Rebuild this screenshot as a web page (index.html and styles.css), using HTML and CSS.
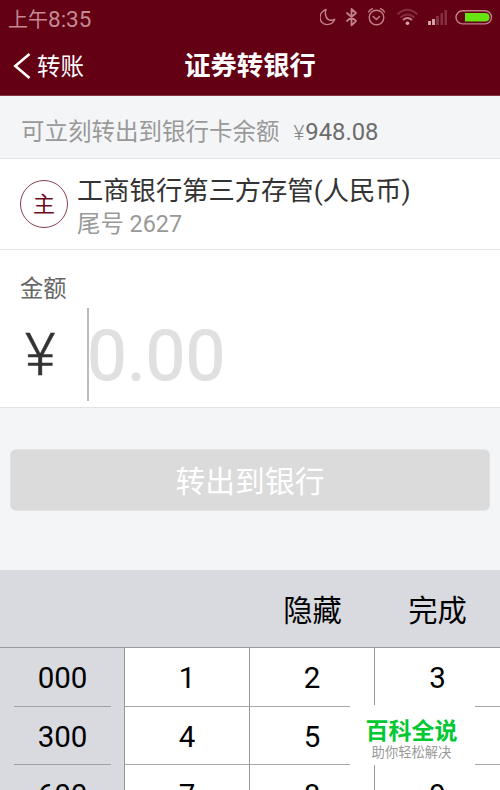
FILE: index.html
```html
<!DOCTYPE html>
<html lang="zh-CN">
<head>
<meta charset="utf-8">
<title>证券转银行</title>
<link rel="stylesheet" href="styles.css">
</head>
<body>
<main class="screen">
  <header class="top">
    <div class="status">
      <span class="clock">上午<span class="time">8:35</span></span>
      <svg class="status-icons" width="176" height="24" viewBox="0 0 176 24" fill="none" stroke="#c0808c" stroke-width="1.4" stroke-linecap="round" stroke-linejoin="round">
        <path d="M6 4.500C3 5.500 0 8.500 0 12.300c0 4 3 7.300 7.300 7.300 3.200 0 6-1.800 7.500-5.300-1.200.6-2.500.9-3.800.9-4.500 0-6.800-5.300-5-10.700z"/>
        <path d="M27 8l9 8-4.500 4.300V4l4.500 4-9 8" stroke-width="1.800"/>
        <circle cx="56.500" cy="12.500" r="7.300"/><path d="M53 11.500l3.500 3 3-3M48.500 7q1.300-2.400 4-3.400M64.500 7q-1.300-2.400-4-3.400"/>
        <g stroke-linecap="butt"><path d="M77.500 9.300q10-9 20 0M80.500 12.500q7-6 14 0" stroke="#862f40" stroke-width="1.800"/><path d="M83 15q4.500-4 9 0" stroke-width="2"/></g>
        <circle cx="87.500" cy="18.200" r="1.800" fill="#d5a7af" stroke="none"/>
        <g stroke="none"><path d="M108 16h3v4h-3zM112 14h3v6h-3z" fill="#d0a1aa"/><path d="M116 11h3v9h-3zM120.500 8h2.500v12h-2.500zM124.500 5h2.500v15h-2.500z" fill="#862f40"/></g>
        <rect x="136" y="5.700" width="35.500" height="13.200" rx="6.600"/>
        <path d="M145 8h20q4.500 0 4.500 4.300t-4.500 4.300h-20z" fill="#66e414" stroke="none"/>
      </svg>
    </div>
    <nav class="nav">
      <a class="back"><svg width="18" height="26" viewBox="0 0 18 26" fill="none" stroke="#fff" stroke-width="2.600"><path d="M16.500 1L2.300 13l14.200 12"/></svg><span>转账</span></a>
      <h1 class="title">证券转银行</h1>
    </nav>
  </header>
  <section class="balance"><span>可立刻转出到银行卡余额</span><span class="yen-small">¥</span><span class="sum">948.08</span></section>
  <section class="account">
    <div class="badge">主</div>
    <div class="details"><div class="name">工商银行第三方存管(人民币)</div><div class="tail">尾号 2627</div></div>
  </section>
  <section class="amount">
    <div class="label">金额</div>
    <div class="entry"><span class="yen">¥</span><span class="field">0.00</span></div>
  </section>
  <button class="submit">转出到银行</button>
  <section class="keyboard">
    <div class="tools"><span class="hide">隐藏</span><span>完成</span></div>
    <div class="keys">
      <div class="key side"><span>000</span></div><div class="key">1</div><div class="key">2</div><div class="key">3</div>
      <div class="key side"><span>300</span></div><div class="key">4</div><div class="key">5</div><div class="key"></div>
      <div class="key side"><span>600</span></div><div class="key">7</div><div class="key">8</div><div class="key">9</div>
    </div>
    <aside class="mark"><strong>百科全说</strong><small>助你轻松解决</small></aside>
  </section>
</main>
</body>
</html>
```
FILE: styles.css
```css
* { box-sizing: border-box; }
body { margin: 0; font-family: Roboto, "Noto Sans CJK SC", sans-serif; }
.screen { width: 500px; height: 790px; overflow: hidden; background: #f4f5f7; display: flex; flex-direction: column; }
.top { height: 96px; flex: none; background: #640014; border-bottom: 1px solid #86384a; }
.status { height: 36px; display: flex; justify-content: space-between; padding: 0 4px 0 8px; color: #c48a95; }
.clock { font-size: 20px; line-height: 38px; white-space: nowrap; }
.time { font-size: 22.500px; }
.status-icons { margin-top: 5px; }
.nav { height: 59px; display: grid; grid-template-columns: 1fr auto 1fr; align-items: center; color: #fff; }
.back { display: flex; align-items: center; gap: 6px; padding-left: 13px; font-size: 23.5px; line-height: 30px; }
.back span { padding-top: 2px; }
.title { margin: 0; padding-top: 1px; font-size: 26.300px; line-height: 34px; }
.balance { height: 63px; flex: none; display: flex; align-items: baseline; padding-left: 21px; border-bottom: 1px solid #e2e3e5; font-size: 23.500px; line-height: 73px; color: #999; }
.yen-small { margin-left: 14px; font-size: 21px; color: #888; font-weight: 300; }
.sum { margin-left: 1px; font-size: 23.800px; color: #6c6c6c; }
.account { height: 91px; flex: none; display: flex; align-items: center; gap: 9px; padding-left: 20px; background: #fff; border-bottom: 1px solid #e2e3e5; }
.badge { width: 48px; height: 48px; border: 1px solid #8b3e4d; border-radius: 50%; color: #6d0b1e; font-size: 22px; line-height: 48px; text-align: center; }
.details { padding-top: 5px; }
.name { font-size: 26.300px; line-height: 34px; color: #333; white-space: nowrap; }
.tail { font-size: 23.400px; line-height: 32px; color: #999; }
.amount { height: 158px; flex: none; padding: 22px 0 0 20px; background: #fff; border-bottom: 1px solid #e2e3e5; }
.label { height: 36px; font-size: 23.300px; line-height: 34px; color: #666; }
.entry { height: 93px; display: flex; }
.yen { width: 67px; padding-left: 5px; font-size: 59px; font-weight: 300; line-height: 93px; color: #333; -webkit-text-stroke: .5px #333; }
.field { border-left: 2px solid #bbb; font-size: 71px; line-height: 96px; color: #e0e0e0; text-indent: -2px; -webkit-text-stroke: .8px #e0e0e0; }
.submit { height: 62px; flex: none; margin: 41px 10px 59px; padding: 4px 0 0; border: 1px solid #e2e3e4; border-radius: 6px; background: #dbdbdb; color: #fff; font: 29.800px/56px Roboto, "Noto Sans CJK SC", sans-serif; }
.keyboard { position: relative; height: 220px; flex: none; background: #d9dadf; color: #000; }
.tools { height: 78px; display: grid; grid-template-columns: repeat(4, 125px); border-bottom: 1px solid #97989c; font-size: 29.300px; line-height: 83px; text-align: center; }
.hide { grid-column: 3; }
.keys { display: grid; grid-template-columns: repeat(4, 125px); grid-template-rows: 59px 58px 58px; font-size: 29.500px; line-height: 60px; text-align: center; }
.key { background: #fff; border-right: 1px solid #97989c; border-bottom: 1px solid #a7a7aa; }
.key:nth-child(4n) { border-right: 0; }
.side { padding: 0 13px 0 14px; background: #d9dadf; border-bottom: 0; }
.side span { display: block; height: 100%; border-bottom: 1px solid #a0a1a5; }
.mark { position: absolute; left: 350px; top: 135px; width: 125px; height: 60px; padding-top: 11px; background: #fff; text-align: center; }
.mark strong { display: block; font-size: 23px; line-height: 31px; color: #00c832; padding-right: 2px; }
.mark small { display: block; font-size: 13.300px; line-height: 12px; color: #999; padding-right: 2px; }
```
